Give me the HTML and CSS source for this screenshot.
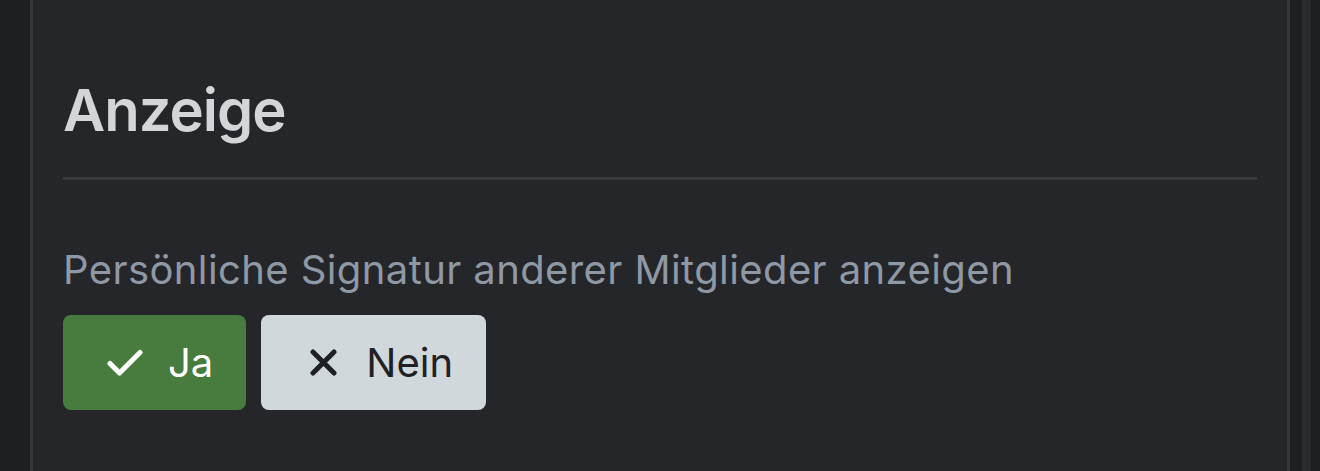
FILE: index.html
```html
<!DOCTYPE html>
<html lang="de">
<head>
<meta charset="utf-8">
<title>Anzeige</title>
<link rel="stylesheet" href="styles.css">
</head>
<body>
<div class="layout">
  <div class="gutter-left"></div>
  <main class="panel">
    <h2 class="panel-title">Anzeige</h2>
    <hr class="divider">
    <div class="field">
      <div class="field-label">Persönliche Signatur anderer Mitglieder anzeigen</div>
      <div class="toggle-group">
        <button class="btn btn-yes" type="button">
          <span class="btn-icon">
            <svg width="36" height="28" viewBox="0 0 36 28"><path d="M3 14.5 L12.5 24 L33 3.5" fill="none" stroke="#fff" stroke-width="5" stroke-linecap="round" stroke-linejoin="round"/></svg>
          </span>
          <span class="btn-text">Ja</span>
        </button>
        <button class="btn btn-no" type="button">
          <span class="btn-icon">
            <svg width="27" height="27" viewBox="0 0 27 27"><path d="M3 3 L24 24 M24 3 L3 24" fill="none" stroke="#1f2023" stroke-width="5" stroke-linecap="round"/></svg>
          </span>
          <span class="btn-text">Nein</span>
        </button>
      </div>
    </div>
  </main>
  <div class="gutter-right">
    <div class="rail-a"></div>
    <div class="rail-b"></div>
    <div class="rail-c"></div>
  </div>
</div>
</body>
</html>
```

FILE: styles.css
```css
* { box-sizing: border-box; }
html, body { margin: 0; padding: 0; height: 100%; }
body {
  background: #1d1f23;
  font-family: Inter, "Noto Sans", "Liberation Sans", sans-serif;
  overflow: hidden;
}
.layout {
  display: flex;
  height: 471px;
  width: 1320px;
}
.gutter-left {
  width: 30px;
  flex: none;
  background: #1d1f23;
}
.panel {
  flex: none;
  width: 1260px;
  background: #25262a;
  border-left: 3px solid #35363a;
  border-right: 3px solid #35363a;
  padding: 74px 30px 0 30px;
}
.panel-title {
  margin: 0;
  font-size: 58px;
  line-height: 72px;
  font-weight: 600;
  color: #d4d5d9;
  letter-spacing: -1px;
}
.divider {
  margin: 31px 0 0 0;
  border: 0;
  height: 3px;
  background: #38393d;
}
.field {
  margin-top: 67px;
}
.field-label {
  font-size: 40px;
  line-height: 46px;
  color: #8f99a5;
  letter-spacing: 0.4px;
}
.toggle-group {
  margin-top: 22px;
  display: flex;
  gap: 15px;
}
.btn {
  height: 95px;
  border: 0;
  border-radius: 8px;
  display: flex;
  align-items: center;
  padding: 0 33px 0 44px;
  gap: 25px;
  font-family: inherit;
  font-size: 40px;
  letter-spacing: 0;
  cursor: pointer;
}
.btn-icon {
  width: 36px;
  display: flex;
  justify-content: center;
  align-items: center;
}
.btn-icon svg { display: block; }
.btn-yes {
  background: #477c3e;
  color: #ffffff;
}
.btn-no {
  background: #d1d8dc;
  color: #1f2023;
}
.btn-text { line-height: 46px; }
.gutter-right {
  flex: 1;
  display: flex;
}
.rail-a { width: 12px; background: #1d1f23; }
.rail-b { width: 9px; background: #2b2c30; }
.rail-c { flex: 1; background: #1d1f23; }
```
